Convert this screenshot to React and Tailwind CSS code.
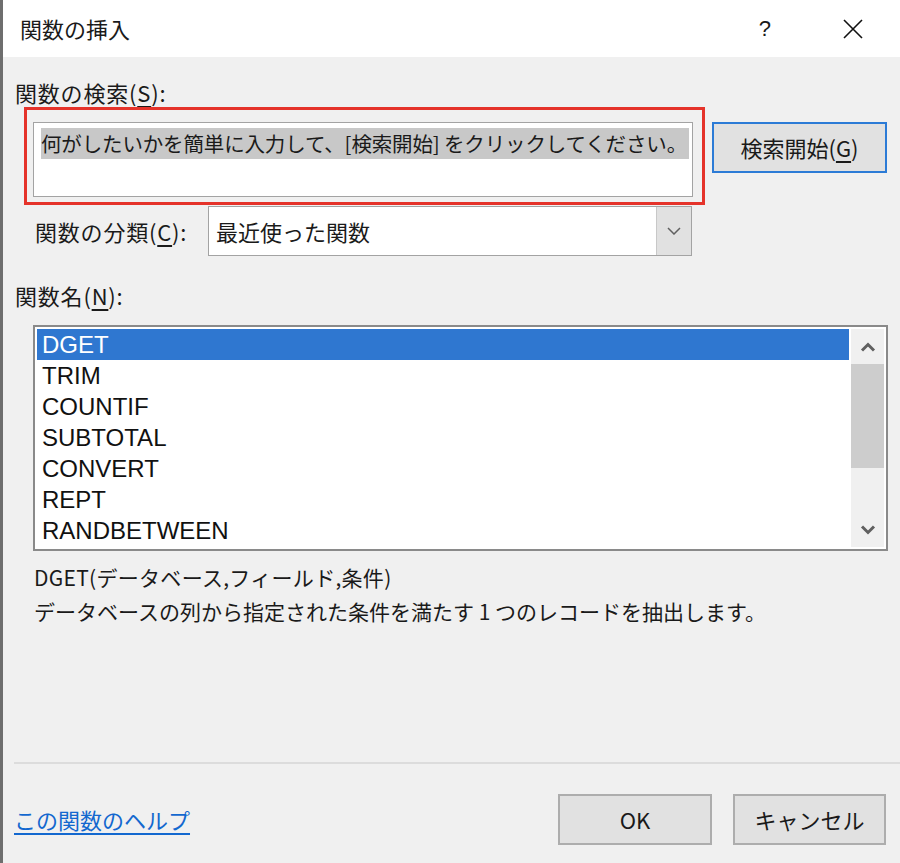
import React from "react";

const jp = "font-['Noto_Sans_CJK_JP',sans-serif]";
const items = ["DGET", "TRIM", "COUNTIF", "SUBTOTAL", "CONVERT", "REPT", "RANDBETWEEN"];

function Chevron({ up, className }) {
  return (
    <svg width="16" height="10" viewBox="0 0 16 10" className={className}>
      <path
        d={up ? "M2 8.5 L8 2.5 L14 8.5" : "M2 1.5 L8 7.5 L14 1.5"}
        fill="none"
        stroke="#606060"
        strokeWidth="3"
      />
    </svg>
  );
}

export default function App() {
  return (
    <div className={`w-[900px] h-[863px] flex flex-col border-l-[3px] border-[#6e6e6e] bg-[#f0f0f0] text-[#1a1a1a] ${jp}`}>
      {/* title bar */}
      <div className="h-[57px] bg-white flex items-center">
        <span className="ml-[17px] text-[22px]">関数の挿入</span>
        <span className="ml-auto text-[22px] font-['Liberation_Sans',sans-serif] mr-[72px]">?</span>
        <svg width="20" height="20" viewBox="0 0 20 20" className="mr-[37px]">
          <path d="M1 1 L19 19 M19 1 L1 19" stroke="#111" strokeWidth="1.6" />
        </svg>
      </div>

      <div className="flex flex-col">
        <div className="mt-[20px] ml-[12px] h-[30px] leading-[30px] text-[22px] tracking-[0.8px]">
          関数の検索(<span className="underline underline-offset-4">S</span>):
        </div>

        <div className="flex items-start ml-[21px]">
          <div className="w-[681px] h-[98px] border-[3px] border-[#e5332a] pt-[12px] pl-[6px]">
            <div className="w-[660px] h-[75px] border border-[#a3a3a3] bg-white pt-[5px] pl-[7px] overflow-hidden">
              <span className="inline-block whitespace-nowrap h-[31px] leading-[31px] bg-[#c8c8c8] text-[20.5px] tracking-[-0.15px] pr-[2px]">
                何がしたいかを簡単に入力して、[検索開始] をクリックしてください。
              </span>
            </div>
          </div>
          <button className="mt-[15px] ml-[7px] w-[175px] h-[51px] border-2 border-[#2c7bd6] bg-[#e1e1e1] text-[22px]">
            検索開始(<span className="underline underline-offset-4">G</span>)
          </button>
        </div>

        <div className="flex items-center mt-[1px] ml-[32px]">
          <span className="w-[173px] text-[22px] tracking-[0.8px]">
            関数の分類(<span className="underline underline-offset-4">C</span>):
          </span>
          <div className="w-[484px] h-[50px] border border-[#a3a3a3] bg-white flex">
            <span className="flex-1 pl-[7px] leading-[48px] text-[22px]">最近使った関数</span>
            <div className="w-[35px] h-[48px] bg-[#e1e1e1] border-l border-[#c8c8c8] flex items-center justify-center">
              <svg width="14" height="8" viewBox="0 0 14 8">
                <path d="M1 1 L7 7 L13 1" fill="none" stroke="#606060" strokeWidth="1.5" />
              </svg>
            </div>
          </div>
        </div>

        <div className="mt-[24px] ml-[12px] h-[30px] leading-[30px] text-[22px] tracking-[0.8px]">
          関数名(<span className="underline underline-offset-4">N</span>):
        </div>

        <div className="mt-[15px] ml-[30px] w-[855px] h-[226px] border-2 border-[#8a8a8a] bg-white p-[2px] flex gap-[2px]">
          <ul className="w-[812px] font-['Liberation_Sans',sans-serif] text-[24px]">
            {items.map((it, i) => (
              <li
                key={it}
                className={`h-[31px] leading-[31px] pl-[5px] ${i === 0 ? "bg-[#2f77d0] text-white" : "text-[#111]"}`}
              >
                {it}
              </li>
            ))}
          </ul>
          <div className="w-[33px] flex flex-col bg-[#f0f0f0]">
            <div className="h-[35px] flex items-center justify-center">
              <Chevron up />
            </div>
            <div className="h-[104px] bg-[#cdcdcd]" />
            <div className="flex-1" />
            <div className="h-[35px] flex items-center justify-center">
              <Chevron />
            </div>
          </div>
        </div>

        <div className="mt-[9px] ml-[31px] leading-[34px] text-[21px]">
          <div className="tracking-[0.3px]">DGET(データベース,フィールド,条件)</div>
          <div>データベースの列から指定された条件を満たす 1 つのレコードを抽出します。</div>
        </div>

        <div className="mt-[134px] ml-[11px] h-[2px] bg-[#dcdcdc]" />

        <div className="mt-[30px] flex items-center ml-[11px]">
          <a href="#" className="text-[22px] text-[#1368cf] underline underline-offset-4">
            この関数のヘルプ
          </a>
          <button className="ml-auto w-[154px] h-[51px] border-2 border-[#adadad] bg-[#e1e1e1] text-[22px]">
            OK
          </button>
          <button className="ml-[21px] mr-[14px] w-[153px] h-[51px] border-2 border-[#adadad] bg-[#e1e1e1] text-[22px]">
            キャンセル
          </button>
        </div>
      </div>
    </div>
  );
}
